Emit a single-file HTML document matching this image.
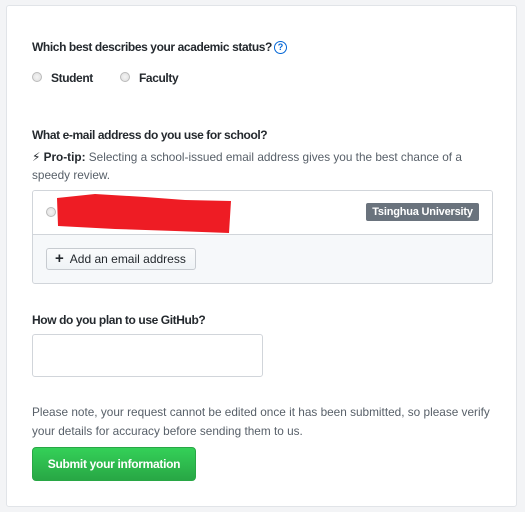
<!DOCTYPE html>
<html><head><meta charset="utf-8"><style>
*{box-sizing:border-box;margin:0;padding:0}
body{width:525px;height:512px;background:#f3f4f6;font-family:"Liberation Sans",sans-serif;font-size:11.8px;color:#24292e;position:relative;overflow:hidden}
.panel{position:absolute;left:6px;top:5px;width:511px;height:502px;background:#fff;border:1px solid #e1e4e8;border-radius:3px}
.a{position:absolute;white-space:nowrap}
.h{font-weight:bold;font-size:12px;letter-spacing:-0.4px}
.radio{position:absolute;width:10px;height:10px;border-radius:50%;border:1px solid #bbb;background:radial-gradient(#f4f4f4,#ddd)}
b{font-weight:bold}
</style></head><body>
<div class="panel"></div>
<div class="a h" style="left:32px;top:40px">Which best describes your academic status?</div>
<div class="a" style="left:274px;top:41px;width:13px;height:13px;border:1.3px solid #0366d6;border-radius:50%;color:#0366d6;font-size:9px;font-weight:bold;text-align:center;line-height:11px">?</div>
<div class="radio" style="left:32px;top:72px"></div>
<div class="a h" style="left:51px;top:71px">Student</div>
<div class="radio" style="left:120px;top:72px"></div>
<div class="a h" style="left:139px;top:71px">Faculty</div>
<div class="a h" style="left:32px;top:128px">What e-mail address do you use for school?</div>
<div class="a" style="left:32px;top:150px;color:#586069"><span style="color:#24292e">&#x26A1;&#xFE0E;</span> <b style="color:#24292e">Pro-tip:</b> Selecting a school-issued email address gives you the best chance of a</div>
<div class="a" style="left:32px;top:168px;color:#586069">speedy review.</div>
<div class="a" style="left:32px;top:190px;width:461px;height:94px;border:1px solid #d1d5da;border-radius:3px;background:#f6f8fa;overflow:hidden">
 <div style="height:44px;background:#fff;border-bottom:1px solid #d1d5da"></div>
</div>
<div class="radio" style="left:46px;top:207px"></div>
<svg class="a" style="left:55px;top:190px" width="180" height="46"><path d="M2 8 L40 4 L90 7 L130 10 L176 11 L174 43 L120 41 L60 39 L3 36 Z" fill="#ee1c24"/></svg>
<div class="a" style="left:366px;top:203px;width:113px;height:18px;background:#6a737d;color:#fff;border-radius:2px;font-weight:bold;font-size:11px;letter-spacing:-0.2px;line-height:18px;text-align:center">Tsinghua University</div>
<div class="a" style="left:46px;top:248px;width:150px;height:22px;border:1px solid #c7cbd0;border-radius:3px;background:linear-gradient(#fafbfc,#eff3f6);font-size:12px;line-height:20px;padding-left:8px"><b style="font-size:15px">+</b>&nbsp; Add an email address</div>
<div class="a h" style="left:32px;top:313px">How do you plan to use GitHub?</div>
<div class="a" style="left:32px;top:334px;width:231px;height:43px;border:1px solid #d1d5da;border-radius:3px;background:#fff"></div>
<div class="a" style="left:32px;top:403px;color:#586069;line-height:19px">Please note, your request cannot be edited once it has been submitted, so please verify<br>your details for accuracy before sending them to us.</div>
<div class="a" style="left:32px;top:447px;width:164px;height:34px;border:1px solid #28a745;border-radius:4px;background:linear-gradient(#34d058,#28a745);color:#fff;font-weight:bold;font-size:12px;letter-spacing:-0.3px;line-height:32px;text-align:center">Submit your information</div>
</body></html>
